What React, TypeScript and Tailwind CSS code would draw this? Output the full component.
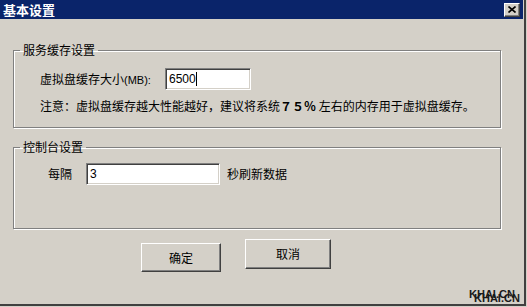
const font = { fontFamily: '"Noto Sans CJK SC", "Liberation Sans", sans-serif' };

const Sunken = ({ value, width, caret }: { value: string; width: string; caret?: boolean }) => (
  <div
    className={`${width} h-[22px] flex items-center px-[2px] bg-white border border-t-[#808080] border-l-[#808080] border-r-white border-b-white shadow-[inset_1px_1px_0_#404040,inset_-1px_-1px_0_#d4d0c8]`}
  >
    <span className="text-[12px] leading-[14px] text-black pl-px" style={{ fontFamily: '"Liberation Sans", sans-serif' }}>
      {value}
    </span>
    {caret && <span className="w-px h-[14px] bg-black" />}
  </div>
);

const Button = ({ label, className }: { label: string; className: string }) => (
  <button
    className={`${className} flex items-center justify-center bg-[#d4d0c8] border border-t-white border-l-white border-r-[#404040] border-b-[#404040] shadow-[inset_-1px_-1px_0_#808080] text-[12px] text-black`}
  >
    {label}
  </button>
);

const Group = ({ title, className, children }: { title: string; className: string; children: React.ReactNode }) => (
  <fieldset
    className={`${className} w-[488px] border border-[#808080] shadow-[1px_1px_0_#fff,inset_1px_1px_0_#fff] m-0 p-0`}
  >
    <legend className="ml-[6px] px-[3px] text-[12px] leading-[14px] text-black">{title}</legend>
    {children}
  </fieldset>
);

export default function App() {
  return (
    <div className="w-[527px] h-[307px] bg-[#d4d0c8]" style={font}>
      <div className="relative w-[526px] h-[306px] bg-[#d4d0c8] border-r-2 border-b-2 border-r-[#404040] border-b-[#404040]">
        {/* title bar */}
        <div className="w-[523px] h-[19px] bg-[#0a246a] flex items-center justify-between pl-[3px] pr-[3px]">
          <span className="text-white text-[13px] font-bold leading-[15px]">基本设置</span>
          <div className="w-[16px] h-[14px] bg-[#d4d0c8] border border-t-white border-l-white border-r-[#404040] border-b-[#404040] shadow-[inset_-1px_-1px_0_#808080] flex items-center justify-center">
            <svg width="8" height="7" viewBox="0 0 8 7">
              <path d="M0.5 0.5 L7.5 6.5 M7.5 0.5 L0.5 6.5" stroke="#000" strokeWidth="1.6" />
            </svg>
          </div>
        </div>

        <div className="pl-[13px] pt-[24px] flex flex-col">
          <Group title="服务缓存设置" className="h-[85px]">
            <div className="flex flex-col pl-[26px] pt-[11px]">
              <div className="flex items-center">
                <span className="w-[125px] text-[12px] leading-[14px] text-black">
                  虚拟盘缓存大小<span className="text-[11px]" style={{ fontFamily: '"Liberation Sans", sans-serif' }}>(MB):</span>
                </span>
                <Sunken value="6500" width="w-[86px]" caret />
              </div>
              <p className="mt-[9px] text-[12px] leading-[14px] text-black whitespace-nowrap">
                注意：虚拟盘缓存越大性能越好，建议将系统<span className="font-bold">７５％</span> 左右的内存用于虚拟盘缓存。
              </p>
            </div>
          </Group>

          <Group title="控制台设置" className="h-[89px] mt-[12px]">
            <div className="flex items-center pl-[34px] pt-[9px]">
              <span className="w-[38px] text-[12px] leading-[14px] text-black">每隔</span>
              <Sunken value="3" width="w-[134px]" />
              <span className="ml-[7px] text-[12px] leading-[14px] text-black">秒刷新数据</span>
            </div>
          </Group>

          <div className="flex items-start pl-[128px]">
            <Button label="确定" className="w-[80px] h-[29px] mt-[14px]" />
            <Button label="取消" className="w-[86px] h-[30px] mt-[10px] ml-[24px]" />
          </div>
        </div>

        {/* watermark: doubled text via shadow */}
        <span
          className="absolute left-[469px] top-[289px] text-[11px] font-bold leading-[11px] text-[#1a1a1a] [text-shadow:5px_4px_0_#1a1a1a]"
          style={{ fontFamily: '"Liberation Sans", sans-serif' }}
        >
          KHAI.CN
        </span>
      </div>
    </div>
  );
}
